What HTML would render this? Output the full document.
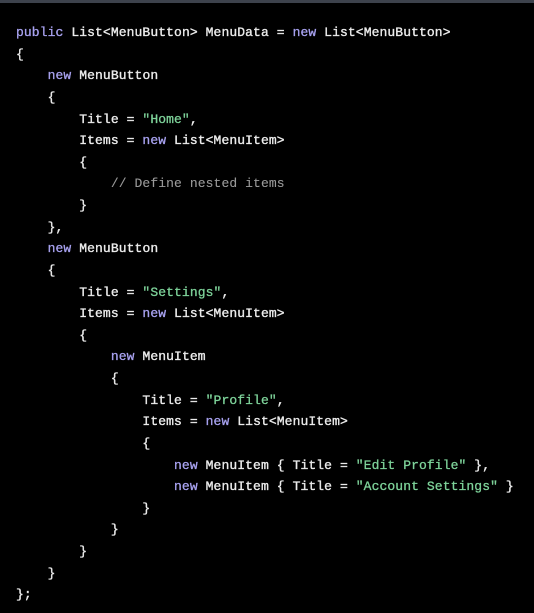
<!DOCTYPE html>
<html><head><meta charset="utf-8"><style>
html,body{margin:0;padding:0;background:#000;width:534px;height:613px;overflow:hidden}
.top{height:3px;background:#3d424c}
pre{margin:0;position:absolute;left:16px;top:22px;font-family:"Liberation Mono",monospace;font-size:13px;letter-spacing:0.1px;line-height:21.62px;color:#ececec;-webkit-text-stroke:0.35px #ececec}
.k{color:#a8a2f0;-webkit-text-stroke:0.3px #a8a2f0}
.s{color:#7ed39a;-webkit-text-stroke:0.3px #7ed39a}
.c{color:#9a9a9a;-webkit-text-stroke:0.1px #9a9a9a}
</style></head><body><div class="top"></div>
<pre><span class="k">public</span> List&lt;MenuButton&gt; MenuData = <span class="k">new</span> List&lt;MenuButton&gt;
{
    <span class="k">new</span> MenuButton
    {
        Title = <span class="s">"Home"</span>,
        Items = <span class="k">new</span> List&lt;MenuItem&gt;
        {
            <span class="c">// Define nested items</span>
        }
    },
    <span class="k">new</span> MenuButton
    {
        Title = <span class="s">"Settings"</span>,
        Items = <span class="k">new</span> List&lt;MenuItem&gt;
        {
            <span class="k">new</span> MenuItem
            {
                Title = <span class="s">"Profile"</span>,
                Items = <span class="k">new</span> List&lt;MenuItem&gt;
                {
                    <span class="k">new</span> MenuItem { Title = <span class="s">"Edit Profile"</span> },
                    <span class="k">new</span> MenuItem { Title = <span class="s">"Account Settings"</span> }
                }
            }
        }
    }
};</pre>
</body></html>
